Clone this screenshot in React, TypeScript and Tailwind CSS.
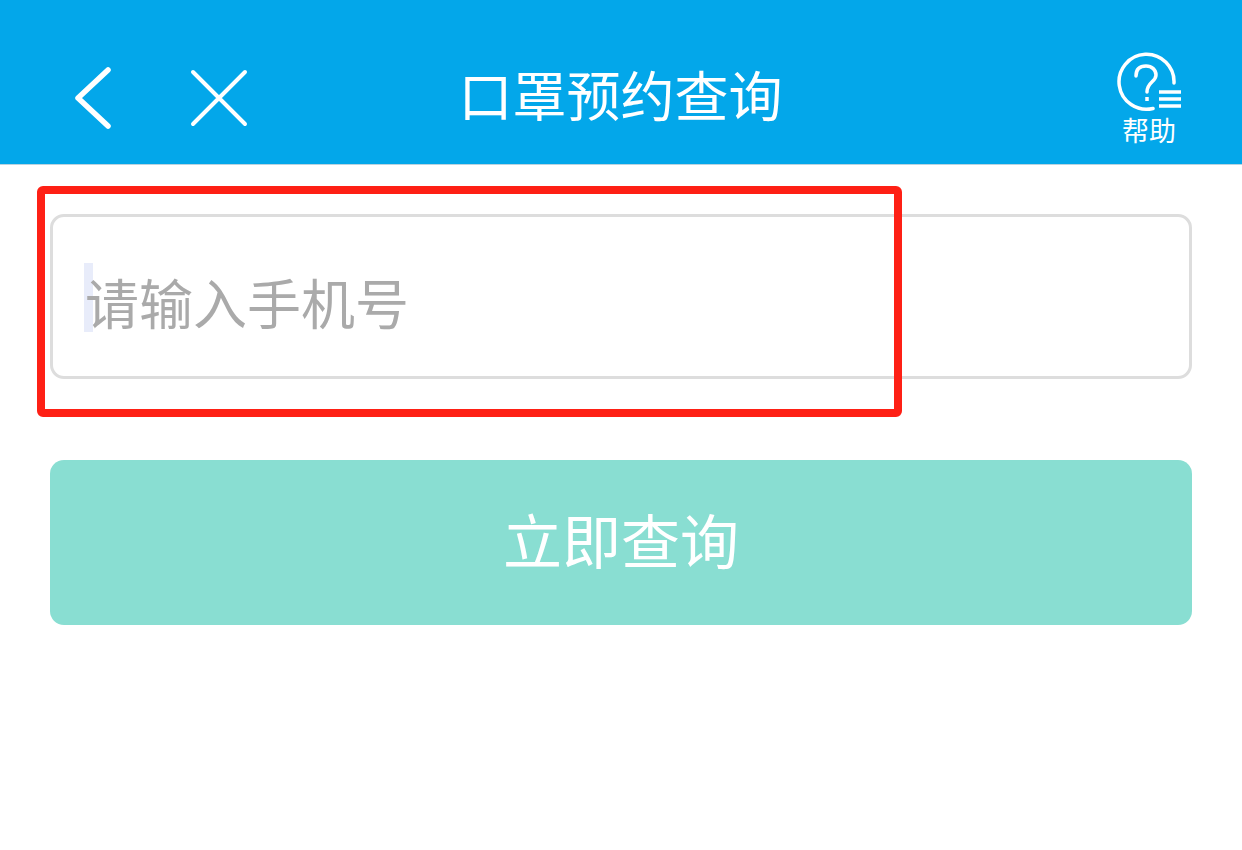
export default function App() {
  return (
    <div className="relative min-h-[850px] bg-white font-['Noto_Sans_CJK_SC','Noto_Sans',sans-serif]">
      {/* 顶部导航 */}
      <header className="relative flex h-[165px] items-center justify-between border-b border-[#b9d3e0] bg-[#03a7ea] pl-[74px] pr-[58px]">
        <div className="flex items-center gap-[78px] pt-[32px]">
          <svg width="38" height="62" viewBox="0 0 38 62" fill="none" stroke="white" strokeWidth="5.5" strokeLinecap="round" strokeLinejoin="round">
            <path d="M34 3 L4 31 L34 59" />
          </svg>
          <svg width="58" height="58" viewBox="0 0 58 58" fill="none" stroke="white" strokeWidth="4" strokeLinecap="round">
            <path d="M3 3 L55 55 M55 3 L3 55" />
          </svg>
        </div>
        <h1 className="absolute left-0 right-0 top-[64px] pr-[1px] text-center text-[54px] leading-[60px] text-white">口罩预约查询</h1>
        <div className="flex flex-col items-center self-start pt-[52px]">
          <svg width="68" height="60" viewBox="0 0 68 60" fill="none" stroke="white">
            <path d="M58 31 A27.5 27.5 0 1 0 37 56.5" strokeWidth="3.5" strokeLinecap="round" />
            <path d="M20 24 C20 17 24 14 30 14 C36 14 40 18 40 23 C40 30 31 30 31 40" strokeWidth="3.5" strokeLinecap="round" />
            <path d="M31 45 V49" strokeWidth="3.5" />
            <path d="M43 40 H65 M43 47 H65 M43 54 H65" strokeWidth="3.5" />
          </svg>
          <span className="mt-[3px] pr-[2px] text-[27px] leading-[30px] text-white">帮助</span>
        </div>
      </header>

      <main className="flex flex-col gap-[81px] px-[50px] pt-[49px]">
        {/* 手机号输入框 */}
        <div className="flex h-[165px] items-center rounded-[14px] border-[3px] border-[#dddddd] pl-[31px]">
          <div className="relative mt-[2px] flex h-[69px] items-center">
            <span className="absolute left-0 top-0 h-[69px] w-[9px] bg-[#e8ecfa]" />
            <span className="relative pl-[1px] pt-[8px] text-[54px] leading-[60px] text-[#aaaaaa]">请输入手机号</span>
          </div>
        </div>
        <button className="flex h-[165px] items-center justify-center rounded-[14px] bg-[#89ded2] pb-[6px] text-[59px] text-white">立即查询</button>
      </main>

      {/* 红色标注框 */}
      <div className="absolute left-[37px] top-[186px] h-[231px] w-[865px] rounded-[6px] border-[8px] border-[#fe2015]" />
    </div>
  );
}
